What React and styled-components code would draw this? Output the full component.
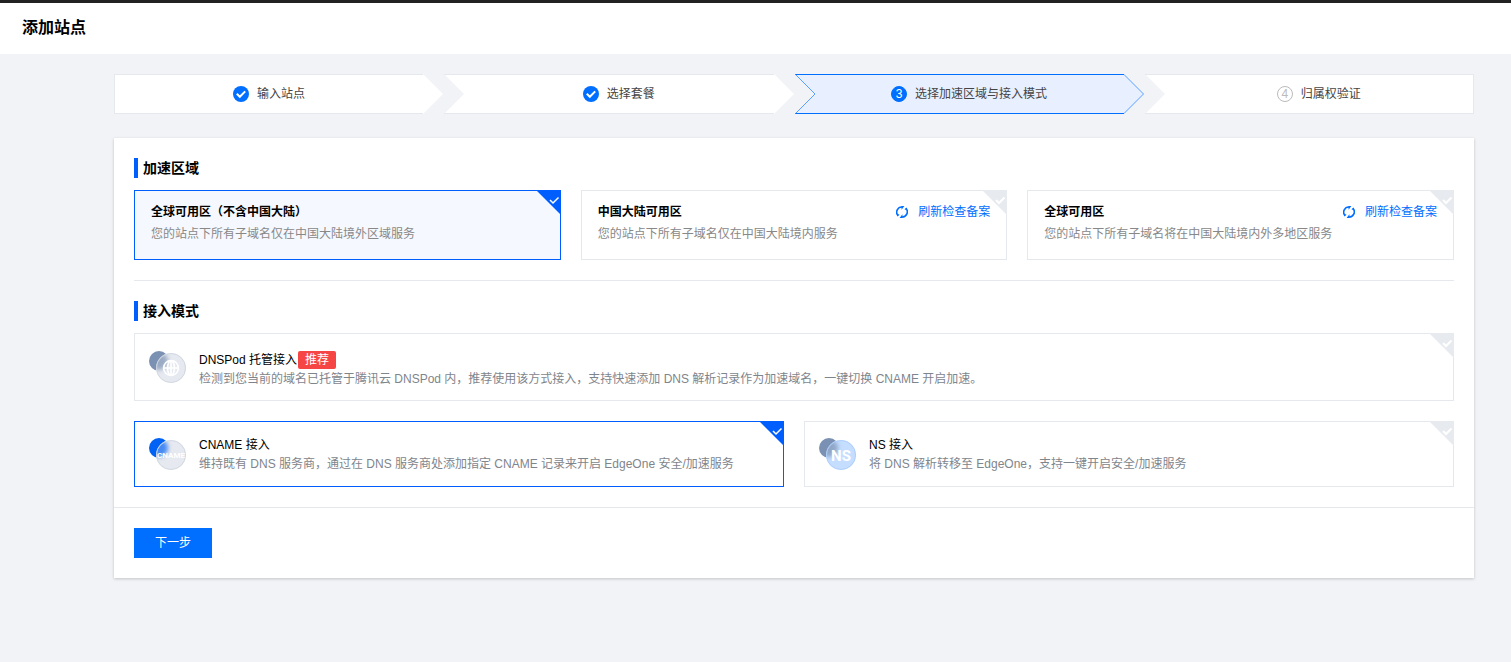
import { useState } from "react";
import styled, { createGlobalStyle } from "styled-components";

const GlobalStyle = createGlobalStyle`
  * {
    box-sizing: border-box;
  }

  body {
    margin: 0;
    background: #f2f3f7;
    color: #000;
    font-family: "Liberation Sans", "Noto Sans CJK SC", sans-serif;
    font-size: 12px;
    line-height: 18px;
  }

  button {
    font: inherit;
    cursor: pointer;
  }
`;

const steps = [
  { label: "输入站点", status: "done" },
  { label: "选择套餐", status: "done" },
  { label: "选择加速区域与接入模式", status: "active" },
  { label: "归属权验证", status: "wait" },
];

const regions = [
  { id: "overseas", name: "全球可用区（不含中国大陆）", description: "您的站点下所有子域名仅在中国大陆境外区域服务" },
  { id: "mainland", name: "中国大陆可用区", description: "您的站点下所有子域名仅在中国大陆境内服务", needRecord: true },
  { id: "global", name: "全球可用区", description: "您的站点下所有子域名将在中国大陆境内外多地区服务", needRecord: true },
];

const modes = [
  {
    id: "dnspod",
    name: "DNSPod 托管接入",
    recommended: true,
    description: "检测到您当前的域名已托管于腾讯云 DNSPod 内，推荐使用该方式接入，支持快速添加 DNS 解析记录作为加速域名，一键切换 CNAME 开启加速。",
  },
  {
    id: "cname",
    name: "CNAME 接入",
    description: "维持既有 DNS 服务商，通过在 DNS 服务商处添加指定 CNAME 记录来开启 EdgeOne 安全/加速服务",
  },
  {
    id: "ns",
    name: "NS 接入",
    description: "将 DNS 解析转移至 EdgeOne，支持一键开启安全/加速服务",
  },
];

const ModeIcon = ({ type, active }) => {
  const back = active ? "#0062f5" : "#7a91b3";
  const front = type === "ns" ? "#c5deff" : "#e6e9ef";
  const ring = type === "ns" ? "#a9ccfa" : "#cdd4df";

  return (
    <ModeSvg viewBox="0 0 38 32" aria-hidden="true">
      <defs>
        <clipPath id={`front-${type}`}>
          <circle cx="22" cy="17" r="14.5" />
        </clipPath>
        <filter id={`blur-${type}`} x="-50%" y="-50%" width="200%" height="200%">
          <feGaussianBlur stdDeviation="2" />
        </filter>
      </defs>
      <circle cx="10" cy="10" r="10" fill={back} />
      <circle cx="22" cy="17" r="15" fill={front} />
      {/* 后方圆透过前方圆的毛玻璃效果 */}
      <g clipPath={`url(#front-${type})`}>
        <circle cx="10" cy="10" r="9" fill={back} opacity="0.7" filter={`url(#blur-${type})`} />
      </g>
      <circle cx="22" cy="17" r="14.5" fill="none" stroke={ring} strokeOpacity="0.8" />
      {type === "dnspod" && (
        <g fill="none" stroke="#fff" strokeWidth="1.6">
          <circle cx="22" cy="17" r="7.4" />
          <ellipse cx="22" cy="17" rx="3.4" ry="7.4" />
          <path d="M15 17h14M22 10v14" />
        </g>
      )}
      {type === "cname" && <IconText x="22" y="20" $size={8}>CNAME</IconText>}
      {type === "ns" && <IconText x="22" y="23" $size={15}>NS</IconText>}
    </ModeSvg>
  );
};

const Corner = ({ checked }) => (
  <CornerSvg viewBox="0 0 25 25" aria-hidden="true">
    <path d="M0 0h25v25z" fill={checked ? "#005eff" : "#e7eaef"} />
    <path d="M14 10l3 3 5.5-5.5" fill="none" stroke="#fff" strokeWidth={checked ? 1.5 : 2} />
  </CornerSvg>
);

const RefreshIcon = () => (
  <svg width="12" height="12" viewBox="0 0 12 12" aria-hidden="true">
    <g fill="none" stroke="currentColor" strokeWidth="1.6">
      <path d="M2.2 9.8A5.2 5.2 0 0 1 6.6 1" />
      <path d="M9.8 2.2A5.2 5.2 0 0 1 5.4 11" />
    </g>
    <path d="M5.4 0h3L5.6 3.8zM6.6 12h-3l2.8-3.8z" fill="currentColor" />
    <path d="M8.4 3.2L11 1.6v2.6zM3.6 8.8L1 10.4V7.8z" fill="currentColor" />
  </svg>
);

const StepMark = ({ status, number }) => {
  if (status === "done") {
    return (
      <svg width="16" height="16" viewBox="0 0 16 16" aria-hidden="true">
        <circle cx="8" cy="8" r="8" fill="#006eff" />
        <path d="M3.8 7.8l3 3 5.4-5.4" fill="none" stroke="#fff" strokeWidth="2" />
      </svg>
    );
  }
  return <StepNumber $active={status === "active"}>{number}</StepNumber>;
};

const StepItem = ({ step, number, isFirst, isLast }) => {
  const active = step.status === "active";
  const fill = active ? "#e8efff" : "#fff";
  const line = active ? "#5ba0ff" : "none";

  return (
    <Step $ends={isFirst || isLast} aria-current={active ? "step" : undefined}>
      {!isFirst && (
        <StepEdge viewBox="0 0 20 40" aria-hidden="true">
          <path d="M0 0h20v40H0l20-20z" fill={fill} />
          <path d="M0 .5h20M0 39.5h20" stroke={active ? "#006eff" : "#e5e8ed"} />
          <path d="M.5 .5L20 20 .5 39.5" fill="none" stroke={line} />
        </StepEdge>
      )}
      <StepBody $active={active} $first={isFirst} $last={isLast}>
        <StepMark status={step.status} number={number} />
        {step.label}
      </StepBody>
      {!isLast && (
        <StepEdge viewBox="0 0 20 40" aria-hidden="true">
          <path d="M0 0l20 20L0 40z" fill={fill} />
          <path d="M0 .5L19.5 20 0 39.5" fill="none" stroke={line} />
        </StepEdge>
      )}
    </Step>
  );
};

const App = () => {
  const [region, setRegion] = useState("overseas");
  const [mode, setMode] = useState("cname");

  return (
    <>
      <GlobalStyle />
      <Header>
        <PageTitle>添加站点</PageTitle>
      </Header>
      <Main>
        <Steps>
          {steps.map((step, index) => (
            <StepItem
              key={step.label}
              step={step}
              number={index + 1}
              isFirst={index === 0}
              isLast={index === steps.length - 1}
            />
          ))}
        </Steps>

        <Panel>
          <PanelBody>
            <Section>
              <SectionTitle>加速区域</SectionTitle>
              <RegionGrid>
                {regions.map((item) => (
                  <RegionCard key={item.id} $checked={region === item.id}>
                    <HiddenRadio
                      name="region"
                      value={item.id}
                      checked={region === item.id}
                      onChange={() => setRegion(item.id)}
                    />
                    <RegionHead>
                      <RegionName>{item.name}</RegionName>
                      {item.needRecord && (
                        <RefreshButton type="button">
                          <RefreshIcon />
                          刷新检查备案
                        </RefreshButton>
                      )}
                    </RegionHead>
                    <RegionDescription>{item.description}</RegionDescription>
                    <Corner checked={region === item.id} />
                  </RegionCard>
                ))}
              </RegionGrid>
            </Section>

            <Divider />

            <Section>
              <SectionTitle>接入模式</SectionTitle>
              <ModeGrid>
                {modes.map((item) => (
                  <ModeCard key={item.id} $checked={mode === item.id} $wide={item.recommended}>
                    <HiddenRadio
                      name="mode"
                      value={item.id}
                      checked={mode === item.id}
                      onChange={() => setMode(item.id)}
                    />
                    <ModeIcon type={item.id} active={mode === item.id} />
                    <ModeInfo $wide={item.recommended}>
                      <ModeName>
                        {item.name}
                        {item.recommended && <Badge>推荐</Badge>}
                      </ModeName>
                      <ModeDescription>{item.description}</ModeDescription>
                    </ModeInfo>
                    <Corner checked={mode === item.id} />
                  </ModeCard>
                ))}
              </ModeGrid>
            </Section>
          </PanelBody>

          <PanelFooter>
            <NextButton type="button">下一步</NextButton>
          </PanelFooter>
        </Panel>
      </Main>
    </>
  );
};

export default App;

const Header = styled.header`
  display: flex;
  align-items: center;
  height: 54px;
  padding: 0 22px 2px;
  background: #fff;
  border-top: 3px solid #222;
`;

const PageTitle = styled.h1`
  margin: 0;
  font-size: 16px;
  line-height: 24px;
  font-weight: bold;
`;

const Main = styled.main`
  padding: 20px 37px 20px 114px;
`;

const Steps = styled.ol`
  display: flex;
  gap: 1px;
  margin: 0 0 24px;
  padding: 0;
  list-style: none;
`;

/* 首尾步骤只有一侧箭头，basis 减半 */
const Step = styled.li`
  display: flex;
  flex: 1 1 ${({ $ends }) => ($ends ? "20px" : "40px")};
  height: 40px;
`;

const StepEdge = styled.svg`
  flex: none;
  width: 20px;
  height: 40px;
`;

const StepBody = styled.div`
  flex: 1;
  display: flex;
  align-items: center;
  justify-content: center;
  gap: 8px;
  color: #444;
  background: ${({ $active }) => ($active ? "#e8efff" : "#fff")};
  border: 0 solid ${({ $active }) => ($active ? "#006eff" : "#e5e8ed")};
  border-width: 1px ${({ $last }) => ($last ? "1px" : "0")} 1px ${({ $first }) => ($first ? "1px" : "0")};
`;

const StepNumber = styled.span`
  width: 16px;
  height: 16px;
  border: 1px solid ${({ $active }) => ($active ? "#006eff" : "#bbb")};
  border-radius: 50%;
  background: ${({ $active }) => ($active ? "#006eff" : "#fff")};
  color: ${({ $active }) => ($active ? "#fff" : "#bbb")};
  line-height: 14px;
  text-align: center;
`;

const Panel = styled.section`
  background: #fff;
  box-shadow: 0 1px 3px 0 rgba(0, 0, 0, 0.2);
`;

const PanelBody = styled.div`
  padding: 20px;
`;

const Section = styled.section`
  display: flex;
  flex-direction: column;
  gap: 12px;
`;

const SectionTitle = styled.h2`
  margin: 0;
  padding-left: 5px;
  border-left: 4px solid #005eff;
  font-size: 14px;
  line-height: 20px;
  font-weight: bold;
`;

const Divider = styled.hr`
  margin: 20px 0;
  border: 0;
  border-top: 1px solid #e5e8ed;
`;

const RegionGrid = styled.div`
  display: grid;
  grid-template-columns: repeat(3, 1fr);
  gap: 20px;
`;

const ModeGrid = styled.div`
  display: grid;
  grid-template-columns: repeat(2, 1fr);
  gap: 20px;
`;

const Card = styled.label`
  position: relative;
  border: 1px solid ${({ $checked }) => ($checked ? "#005eff" : "#e5e8ed")};
  cursor: pointer;
`;

const RegionCard = styled(Card)`
  display: flex;
  flex-direction: column;
  gap: 4px;
  padding: 12px 16px 16px;
  background: ${({ $checked }) => ($checked ? "#f5f8ff" : "#fff")};
`;

const HiddenRadio = styled.input.attrs({ type: "radio" })`
  position: absolute;
  width: 1px;
  height: 1px;
  margin: 0;
  opacity: 0;
`;

const RegionHead = styled.div`
  display: flex;
  justify-content: space-between;
`;

const RegionName = styled.strong`
  font-weight: bold;
`;

const RegionDescription = styled.div`
  color: #888;
`;

const RefreshButton = styled.button`
  display: flex;
  align-items: center;
  gap: 10px;
  padding: 0;
  border: 0;
  background: none;
  color: #006eff;
`;

const CornerSvg = styled.svg`
  position: absolute;
  top: -1px;
  right: -1px;
  width: 25px;
  height: 25px;
`;

const ModeCard = styled(Card)`
  display: flex;
  align-items: center;
  gap: 12px;
  min-height: 66px;
  padding: 12px 14px;
  grid-column: ${({ $wide }) => ($wide ? "1 / -1" : "auto")};
`;

const ModeSvg = styled.svg`
  flex: none;
  width: 38px;
  height: 32px;
`;

const IconText = styled.text`
  fill: #fff;
  font-family: Roboto, "Liberation Sans", sans-serif;
  font-size: ${({ $size }) => $size}px;
  font-weight: bold;
  text-anchor: middle;
`;

const ModeInfo = styled.div`
  flex: 1;
  padding-top: ${({ $wide }) => ($wide ? "4px" : "0")};
`;

const ModeName = styled.div`
  display: flex;
  align-items: center;
  min-height: 19px;
`;

const ModeDescription = styled.div`
  color: #7f858c;
`;

const Badge = styled.span`
  padding: 0 7px;
  margin: 1px;
  border-radius: 2px;
  background: #f54545;
  color: #fff;
`;

const PanelFooter = styled.footer`
  padding: 20px;
  border-top: 1px solid #e5e8ed;
`;

const NextButton = styled.button`
  display: block;
  min-width: 78px;
  height: 30px;
  padding: 0 20px;
  border: 0;
  background: #006eff;
  color: #fff;
`;
